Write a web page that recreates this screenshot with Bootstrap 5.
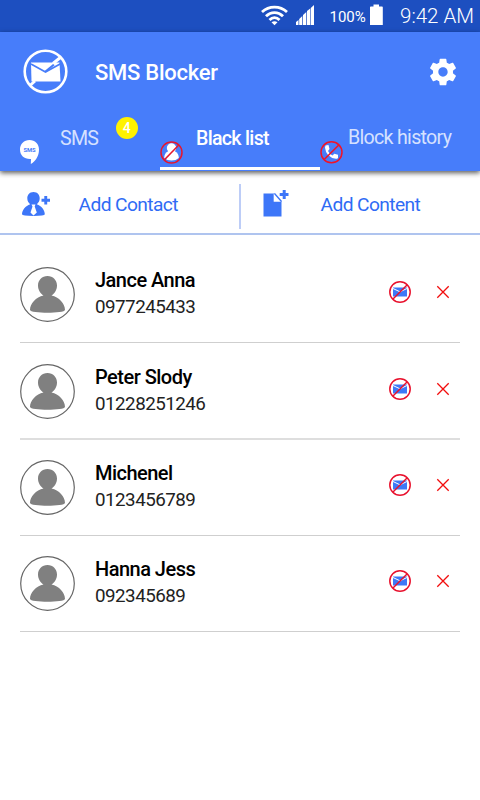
<!DOCTYPE html>
<html lang="en">
<head>
<meta charset="utf-8">
<meta name="viewport" content="width=device-width, initial-scale=1">
<title>SMS Blocker</title>
<link href="https://cdn.jsdelivr.net/npm/bootstrap@5.3.0/dist/css/bootstrap.min.css" rel="stylesheet">
<style>
body{font-family:Roboto,sans-serif;background:#fff;color:#111;overflow:hidden;line-height:1}
svg{display:block;flex:none}
.status-bar{height:32px;background:#1d4fc0;padding:0 6px 0 261px}
.status-pct{font-size:15px;width:36px;margin-left:13.5px;padding-top:2px}
.status-time{font-size:20.5px;font-weight:300;margin-left:auto;white-space:nowrap}
.app-head{background:#477dfa;box-shadow:0 2px 5px rgba(0,0,0,.65);position:relative;z-index:1}
.title-row{height:80px;padding:0 23px}
.title-text{font-size:22px;font-weight:500;margin-left:27px;padding-top:1px;letter-spacing:-.25px}
.tab-row{height:59px}
.tab-cell{width:160px;color:#d6e1ff;font-size:19.6px;letter-spacing:-.7px;white-space:nowrap}
.tab-cell.on{color:#fff;font-weight:500;border-bottom:3px solid #fff;height:58px}
.count-dot{width:22px;height:22px;border-radius:50%;background:#fff200;color:#fff;font-size:14px;font-weight:500;letter-spacing:0}
.action-row{height:64px;border-bottom:2px solid #afc4ef;color:#2f6bf5;font-size:19.2px;letter-spacing:-.6px}
.action-cell{width:240px}
.action-rule{width:2px;height:45px;background:#bdcdf7;margin:13px 0 0 -1px}
.people{margin:11.5px 20px 0}
.person{height:96.4px;border-bottom:1px solid #cfcfcf;padding:20.5px 10px 0 0}
.person:nth-child(2){border-bottom:2px solid #dedede;height:97px;padding-top:21px}
.person:nth-child(3){height:95.8px;padding-top:20px}
.person-text{margin-left:20px}
.person-name{font-size:20px;font-weight:500;color:#000;line-height:26px;white-space:nowrap;letter-spacing:-.52px}
.person-num{font-size:18.8px;color:#222;line-height:28px;letter-spacing:-.52px}
</style>
<script src="https://cdn.jsdelivr.net/npm/bootstrap@5.3.0/dist/js/bootstrap.bundle.min.js"></script>
</head>
<body>
<svg width="0" height="0" class="position-absolute" aria-hidden="true">
<symbol id="avatar" viewBox="0 0 55 55"><circle cx="27.500" cy="27.500" r="26.800" fill="#fff" stroke="#666" stroke-width="1.200"/><path d="M27.500 9C33 9 37 13.200 37 18.500C37 23 34.500 26.500 31.500 28.500C39 30 45 36.500 45 43C45 44.700 36 45.800 27.500 45.800S10 44.700 10 43C10 36.500 16 30 23.500 28.500C20.500 26.500 18 23 18 18.500C18 13.200 22 9 27.500 9Z" fill="#808080"/></symbol>
<symbol id="blockmail" viewBox="0 0 24 24"><path d="M5 7.500H19V16.500H5Z" fill="#3d78f7"/><path d="M5 8.500L12 11.800L19 8.500" fill="none" stroke="#fff" stroke-width="1"/><circle cx="12" cy="12" r="10.200" fill="none" stroke="#e8112d" stroke-width="1.500"/><path d="M5 19L19 5" stroke="#e8112d" stroke-width="1.500"/></symbol>
<symbol id="cross" viewBox="0 0 14 14"><path d="M1.300 1.300L12.700 12.700M12.700 1.300L1.300 12.700" stroke="#f20d0d" stroke-width="1.300"/></symbol>
</svg>

<header class="status-bar d-flex align-items-center text-white">
  <svg width="27" height="32" viewBox="0 0 27 32" fill="none" stroke="#fff" stroke-width="2.800"><path d="M1 12C8 5.500 19 5.500 26 12M5 16.300C10 11.300 17 11.300 22 16.300M8.500 20C11.500 17 15.500 17 18.500 20"/><path d="M10.500 22.200Q13.500 20.200 16.500 22.200L13.500 25.300Z" fill="#fff" stroke="none"/></svg>
  <svg width="20" height="32" viewBox="0 0 20 32" class="ms-2" fill="#fff"><path d="M-.5 25V22.500L2.500 20V25ZM3.200 25V19L6.300 16V25ZM7 25V15L10.300 12V25ZM11 25V11L14.200 8.500V25ZM14.800 25V8L18 5V25Z"/></svg>
  <span class="status-pct">100%</span>
  <svg width="14" height="32" viewBox="0 0 14 32" class="ms-1" fill="#fff"><path d="M3.500 4.500H9V6.500H12Q12.800 6.500 12.800 7.300V25H0V7.300Q0 6.500 .800 6.500H3.500Z"/></svg>
  <span class="status-time">9:42 AM</span>
</header>

<div class="app-head">
  <div class="title-row d-flex align-items-center text-white">
    <svg width="45" height="45" viewBox="0 0 45 45" style="margin-top:-1px"><path d="M8 13.500H36.500L37.500 32.500H8.500Z" fill="#fff"/><path d="M8 15L22.500 23L38 14.500" fill="none" stroke="#477dfa" stroke-width="1.600"/><path d="M22.500 22.500L31 15.500" stroke="#477dfa" stroke-width="2"/><path d="M30 14.500L38 8M7 36.500L12 32" stroke="#fff" stroke-width="3"/><circle cx="22.500" cy="22.500" r="20.800" fill="none" stroke="#fff" stroke-width="2.600"/></svg>
    <span class="title-text">SMS Blocker</span>
    <svg class="ms-auto" style="margin-right:-2px" width="32" height="32" viewBox="0 0 24 24" fill="#fff"><path d="M19.430 12.980c.040-.320.070-.640.070-.980s-.030-.660-.070-.980l2.110-1.650c.190-.150.240-.420.120-.640l-2-3.460c-.120-.220-.390-.300-.610-.220l-2.490 1c-.520-.400-1.080-.730-1.690-.980l-.380-2.650C14.460 2.180 14.250 2 14 2h-4c-.250 0-.460.180-.490.420l-.380 2.650c-.610.250-1.170.590-1.690.980l-2.490-1c-.230-.090-.490 0-.610.220l-2 3.460c-.130.220-.070.490.120.640l2.110 1.650c-.040.320-.070.650-.070.980s.030.660.070.980l-2.110 1.650c-.190.150-.240.420-.120.640l2 3.460c.120.220.390.300.610.220l2.490-1c.520.400 1.080.730 1.690.980l.380 2.650c.030.240.240.420.490.420h4c.250 0 .460-.180.490-.420l.380-2.650c.610-.250 1.170-.590 1.690-.980l2.490 1c.230.090.490 0 .610-.220l2-3.460c.120-.220.070-.490-.120-.640zM12 15.500c-1.930 0-3.500-1.570-3.500-3.500s1.570-3.500 3.500-3.500 3.500 1.570 3.500 3.500-1.570 3.500-3.500 3.500z"/></svg>
  </div>
  <nav class="tab-row d-flex align-items-start">
    <div class="tab-cell d-flex">
      <svg width="20" height="25" viewBox="0 0 20 25" style="margin:28px 0 0 20px"><path d="M9.500 0C15 0 19 4 19 9.500C19 16 15.500 21.500 10.800 24L11 19C4.500 19.500 0 15.500 0 9.500C0 4 4 0 9.500 0Z" fill="#fff"/><text x="9.500" y="12.300" text-anchor="middle" font-size="5.800" font-weight="700" letter-spacing="0" fill="#477dfa">SMS</text></svg>
      <span style="margin:17px 0 0 20px">SMS</span>
      <span class="count-dot d-flex align-items-center justify-content-center" style="margin:5px 0 0 17.500px">4</span>
    </div>
    <div class="tab-cell on d-flex">
      <svg width="23" height="24" viewBox="0 0 23 24" style="margin:28px 0 0 0" fill="#fff"><circle cx="11.500" cy="8" r="4.700"/><path d="M8.500 11H14.500Q18.800 13 18.800 18Q16 20.500 11.500 20.500T4.200 18Q4.200 13 8.500 11Z"/><circle cx="11.500" cy="12.500" r="10.500" fill="none" stroke="#e5172f" stroke-width="1.500"/><path d="M4.200 20L18.800 5" stroke="#e5172f" stroke-width="1.600"/></svg>
      <span style="margin:17px 0 0 13px">Black list</span>
    </div>
    <div class="tab-cell d-flex">
      <svg width="23" height="24" viewBox="0 0 23 24" style="margin:28px 0 0 0"><path d="M5.500 5.500L8.500 5L9.500 9L8 11Q9.500 14.200 12.500 15.500L14.300 13.800L18 14.800V18Q17.500 19 16 18.700Q6 17.500 5 7.500Z" fill="#fff"/><circle cx="11.500" cy="12.300" r="10.500" fill="none" stroke="#f01428" stroke-width="1.500"/><path d="M4.200 19.500L18.800 5" stroke="#f01428" stroke-width="1.600"/></svg>
      <span style="margin:16px 0 0 5px">Block history</span>
    </div>
  </nav>
</div>

<div class="action-row d-flex">
  <div class="action-cell d-flex">
    <svg width="30" height="26" viewBox="0 0 30 26" style="margin:20px 0 0 21px" fill="#3d76f8"><path d="M12.500 1C16.500 1 18.700 4 18.700 7.300C18.700 10 17.500 12 15.800 13.200C20.500 15 23.800 19 23.800 23.300Q23.800 25 12.500 25T1 23.300C1 19 4.500 15 9.200 13.200C7.500 12 6.300 10 6.300 7.300C6.300 4 8.500 1 12.500 1Z"/><path d="M10.500 13.500H14.500L13.700 15.500L15.800 21.500L12.500 24.500L9.500 21.500L11.500 15.500Z" fill="#fff"/><path d="M23.300 5H26.200V7.800H29V10.700H26.200V13.500H23.300V10.700H20.500V7.800H23.300Z"/></svg>
    <span style="margin:24px 0 0 27.500px">Add Contact</span>
  </div>
  <div class="action-rule"></div>
  <div class="action-cell d-flex">
    <svg width="27" height="29" viewBox="0 0 27 29" style="margin:17px 0 0 22px" fill="#3d76f8"><path d="M.5 5.500H11.500L18.500 13.500V28.500H.500Z"/><path d="M10.700 6V13.800H18.500L12.500 6Z" fill="#fff"/><path d="M11.500 5.500L18.500 13.500" stroke="#3d76f8" stroke-width="1.300"/><path d="M19.700 2H22.700V5H25.500V8H22.700V11H19.700V8H16.700V5H19.700Z"/></svg>
    <span style="margin:24px 0 0 31px">Add Content</span>
  </div>
</div>

<main class="people" id="people"></main>
<script>
const people=[["Jance Anna","0977245433"],["Peter Slody","01228251246"],["Michenel","0123456789"],["Hanna Jess","092345689"]];
document.getElementById("people").innerHTML=people.map(([name,num])=>`
<div class="person d-flex align-items-start">
  <svg width="55" height="55"><use href="#avatar"/></svg>
  <div class="person-text"><div class="person-name">${name}</div><div class="person-num">${num}</div></div>
  <svg class="ms-auto" style="margin-top:13px" width="24" height="24"><use href="#blockmail"/></svg>
  <svg style="margin:18px 0 0 24px" width="14" height="14"><use href="#cross"/></svg>
</div>`).join("");
</script>
</body>
</html>
